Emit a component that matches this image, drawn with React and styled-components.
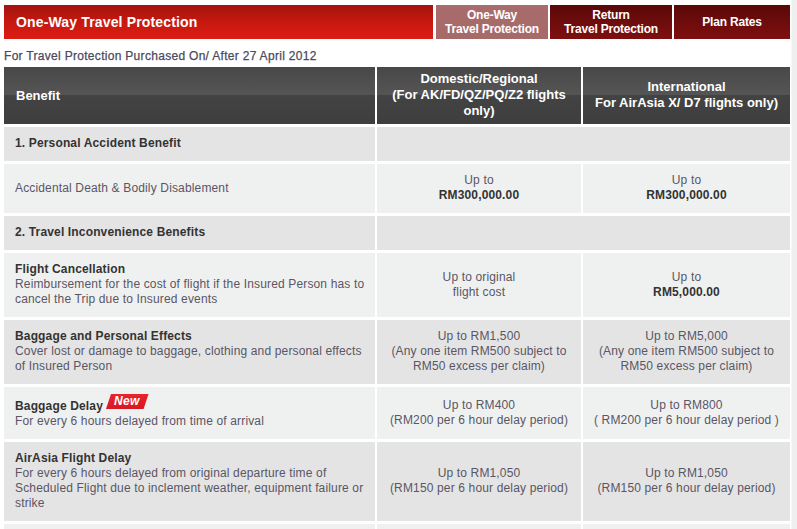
import React from "react";
import styled, { createGlobalStyle } from "styled-components";

const Global = createGlobalStyle`
  html, body { margin: 0; padding: 0; }
  body {
    font-family: "Liberation Sans", Arial, sans-serif;
    background: linear-gradient(to right, #ffffff 0, #ffffff 791px, #efefef 792px, #efefef 100%);
    min-height: 529px;
  }
`;

const Page = styled.div`
  width: 786px;
  padding: 5px 0 0 4px;
`;

const TopBar = styled.div`
  display: flex;
  height: 34px;
`;

const TitleBar = styled.div`
  width: 429px;
  margin-right: 3px;
  display: flex;
  align-items: center;
  padding-left: 12px;
  box-sizing: border-box;
  background: linear-gradient(to bottom, #a3130f 0%, #c4180f 45%, #dc1d14 100%);
  color: #fff;
  font-weight: bold;
  font-size: 14px;
  letter-spacing: 0.15px;
`;

const Tab = styled.div`
  width: ${(p) => p.$w}px;
  margin-right: 2px;
  display: flex;
  align-items: center;
  justify-content: center;
  text-align: center;
  color: #fff;
  font-weight: bold;
  font-size: 12px;
  line-height: 14px;
  letter-spacing: -0.2px;
  background: ${(p) =>
    p.$active
      ? "linear-gradient(to bottom, #a86c6c 0%, #a66a69 100%)"
      : "linear-gradient(to bottom, #5a0808 0%, #6e0c0c 50%, #7e0f0f 100%)"};
  &:last-child { margin-right: 0; }
`;

const Subtitle = styled.div`
  font-size: 12px;
  color: #4a4a5c;
  line-height: 14px;
  padding: 10px 0 4px 0;
  letter-spacing: 0.3px;
  -webkit-text-stroke: 0.25px #4a4a5c;
`;

const Grid = styled.div`
  display: grid;
  grid-template-columns: 371px 204px 207px;
  column-gap: 2px;
  row-gap: 3px;
`;

const Head = styled.div`
  display: flex;
  align-items: center;
  justify-content: ${(p) => (p.$left ? "flex-start" : "center")};
  text-align: center;
  padding: ${(p) => (p.$left ? "0 0 0 12px" : "4px 2px 5px")};
  min-height: 48px;
  color: #fff;
  font-weight: bold;
  font-size: 13px;
  line-height: 16px;
  background: linear-gradient(to bottom, #484848 0%, #555555 49%, #434343 50%, #3e3e3e 100%);
`;

const Cell = styled.div`
  display: flex;
  flex-direction: column;
  justify-content: center;
  align-items: ${(p) => (p.$center ? "center" : "flex-start")};
  text-align: ${(p) => (p.$center ? "center" : "left")};
  grid-column: ${(p) => (p.$span ? `span ${p.$span}` : "auto")};
  padding: ${(p) => (p.$center ? "9px 2px 10px" : "9px 4px 10px 11px")};
  background: ${(p) => (p.$shade ? "#e4e4e4" : "#eff1f1")};
  font-size: 12px;
  line-height: 15px;
  letter-spacing: 0.15px;
  color: #5a5664;
  white-space: nowrap;
`;

const Section = styled.span`
  font-weight: bold;
  color: #333;
`;

const Title = styled.span`
  font-weight: bold;
  color: #333;
  display: flex;
  align-items: flex-end;
  height: ${(p) => (p.$tall ? "18px" : "15px")};
`;

const Amount = styled.span`
  font-weight: bold;
  color: #333;
`;

const Badge = styled.span`
  align-self: flex-start;
  margin-top: -2px;
  margin-left: 3px;
  height: 15px;
  line-height: 15px;
  padding: 0 9px 0 8px;
  font-size: 12px;
  font-style: italic;
  font-weight: bold;
  letter-spacing: 0.3px;
  color: #fff;
  background: linear-gradient(to bottom, #e8242c, #d81822);
  clip-path: polygon(5px 0, 100% 0, calc(100% - 5px) 100%, 0 100%);
`;

const Lines = ({ items }) =>
  items.map((t, i) => <span key={i}>{t}</span>);

export default function App() {
  return (
    <Page>
      <Global />
      <TopBar>
        <TitleBar>One-Way Travel Protection</TitleBar>
        <Tab $w={112} $active>One-Way<br />Travel Protection</Tab>
        <Tab $w={122}>Return<br />Travel Protection</Tab>
        <Tab $w={116}>Plan Rates</Tab>
      </TopBar>
      <Subtitle>For Travel Protection Purchased On/ After 27 April 2012</Subtitle>
      <Grid>
        <Head $left>Benefit</Head>
        <Head>Domestic/Regional<br />(For AK/FD/QZ/PQ/Z2 flights<br />only)</Head>
        <Head>International<br />For AirAsia X/ D7 flights only)</Head>

        <Cell $shade><Section>1. Personal Accident Benefit</Section></Cell>
        <Cell $shade $span={2} />

        <Cell>Accidental Death &amp; Bodily Disablement</Cell>
        <Cell $center><span>Up to</span><Amount>RM300,000.00</Amount></Cell>
        <Cell $center><span>Up to</span><Amount>RM300,000.00</Amount></Cell>

        <Cell $shade><Section>2. Travel Inconvenience Benefits</Section></Cell>
        <Cell $shade $span={2} />

        <Cell>
          <Title>Flight Cancellation</Title>
          <Lines items={["Reimbursement for the cost of flight if the Insured Person has to", "cancel the Trip due to Insured events"]} />
        </Cell>
        <Cell $center><Lines items={["Up to original", "flight cost"]} /></Cell>
        <Cell $center><span>Up to</span><Amount>RM5,000.00</Amount></Cell>

        <Cell $shade>
          <Title>Baggage and Personal Effects</Title>
          <Lines items={["Cover lost or damage to baggage, clothing and personal effects", "of Insured Person"]} />
        </Cell>
        <Cell $shade $center><Lines items={["Up to RM1,500", "(Any one item RM500 subject to", "RM50 excess per claim)"]} /></Cell>
        <Cell $shade $center><Lines items={["Up to RM5,000", "(Any one item RM500 subject to", "RM50 excess per claim)"]} /></Cell>

        <Cell>
          <Title $tall>Baggage Delay<Badge>New</Badge></Title>
          <span>For every 6 hours delayed from time of arrival</span>
        </Cell>
        <Cell $center><Lines items={["Up to RM400", "(RM200 per 6 hour delay period)"]} /></Cell>
        <Cell $center><Lines items={["Up to RM800", "( RM200 per 6 hour delay period )"]} /></Cell>

        <Cell $shade>
          <Title>AirAsia Flight Delay</Title>
          <Lines items={["For every 6 hours delayed from original departure time of", "Scheduled Flight due to inclement weather, equipment failure or", "strike"]} />
        </Cell>
        <Cell $shade $center><Lines items={["Up to RM1,050", "(RM150 per 6 hour delay period)"]} /></Cell>
        <Cell $shade $center><Lines items={["Up to RM1,050", "(RM150 per 6 hour delay period)"]} /></Cell>

        <Cell />
        <Cell $center />
        <Cell $center />
      </Grid>
    </Page>
  );
}
